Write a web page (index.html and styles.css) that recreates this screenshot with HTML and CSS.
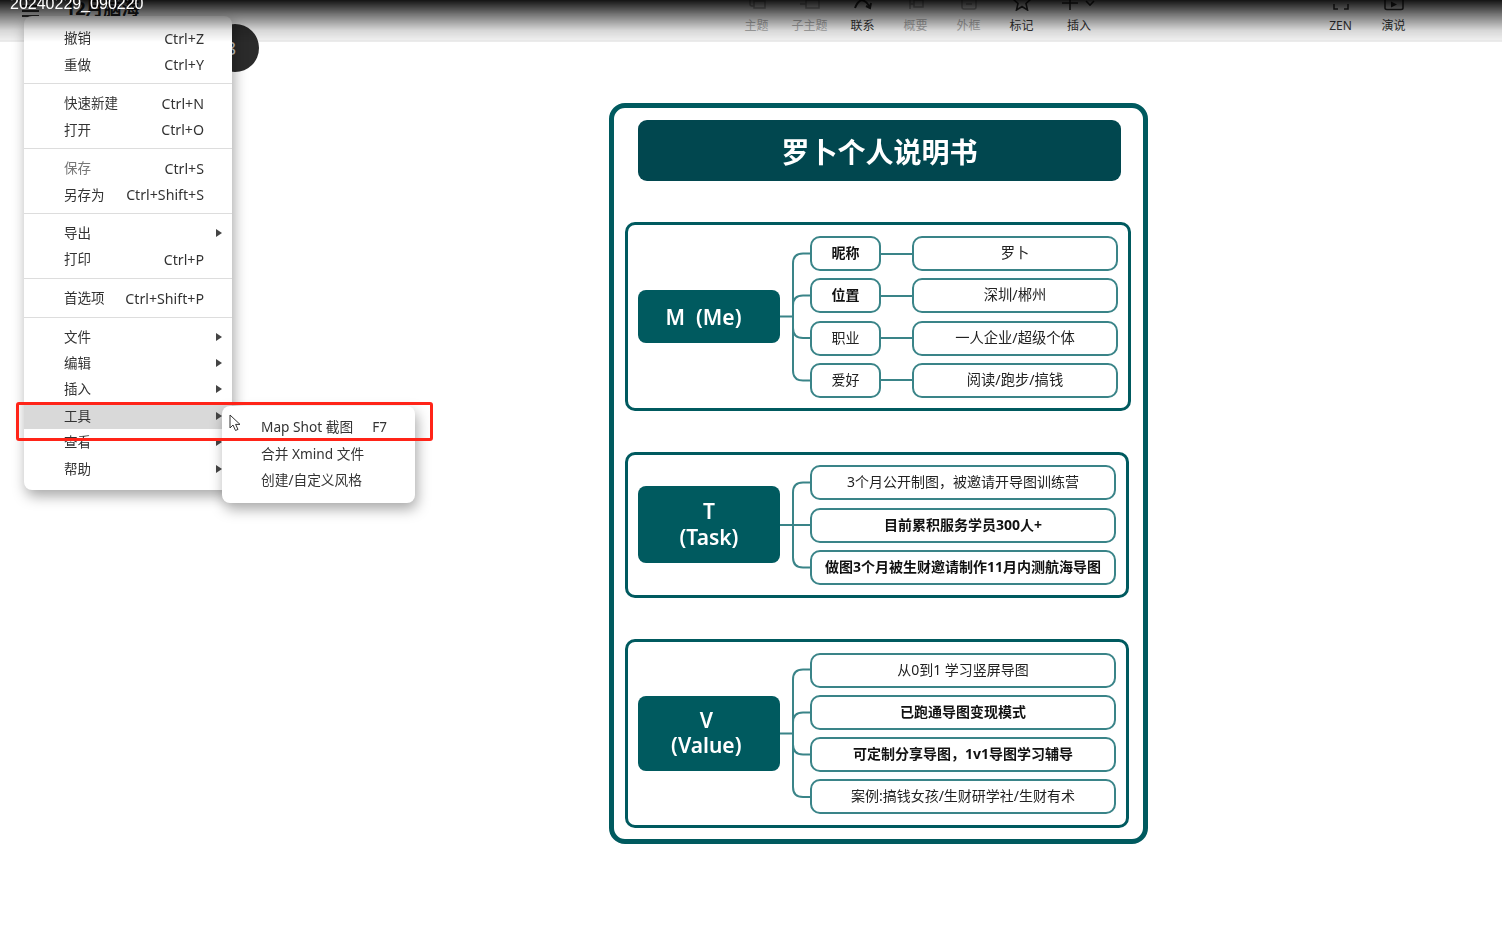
FILE: index.html
```html
<!DOCTYPE html>
<html lang="zh-CN">
<head>
    <meta charset="UTF-8">
    <title>罗卜个人说明书</title>
    <link rel="stylesheet" href="styles.css">
</head>
<body>

    <div class="toolbar">
        <div class="doc">
            <svg class="burger" width="17" height="14" viewBox="0 0 17 14"><path d="M0 1H17M0 6H17M0 11H17" stroke="#333" stroke-width="2" fill="none"/></svg>
            <span class="doc-title">12月脑海</span>
        </div>
        <div class="tools">
            <div class="tool off">
                <svg width="20" height="20" viewBox="0 -10 20 20" fill="none" stroke="currentColor" stroke-width="1.5"><path d="M3 -2V3Q3 5 5 5H7M7 0H18V7H7Z"/></svg>
                <span>主题</span>
            </div>
            <div class="tool off">
                <svg width="20" height="20" viewBox="0 -10 20 20" fill="none" stroke="currentColor" stroke-width="1.5"><path d="M0 3H6M6 -1H19V7H6Z"/></svg>
                <span>子主题</span>
            </div>
            <div class="tool">
                <svg width="20" height="20" viewBox="0 -10 20 20" fill="none" stroke="currentColor" stroke-width="2"><path d="M2 7Q8 -8 17 6M13 5L17 7L18 2"/></svg>
                <span>联系</span>
            </div>
            <div class="tool off">
                <svg width="20" height="20" viewBox="0 -10 20 20" fill="none" stroke="currentColor" stroke-width="1.5"><path d="M4 -2V8M4 3H8M8 -1H17V6H8Z"/></svg>
                <span>概要</span>
            </div>
            <div class="tool off">
                <svg width="20" height="20" viewBox="0 -10 20 20" fill="none" stroke="currentColor" stroke-width="1.5"><path d="M3 -2V6Q3 8 5 8H15Q17 8 17 6V-2M7 3H13"/></svg>
                <span>外框</span>
            </div>
            <div class="tool">
                <svg width="20" height="20" viewBox="0 -10 20 20" fill="none" stroke="currentColor" stroke-width="1.6"><path d="M10 -9L12.5 -2.5L19 -2L14 2.5L15.5 9L10 5.5L4.5 9L6 2.5L1 -2L7.5 -2.5Z"/></svg>
                <span>标记</span>
            </div>
            <div class="tool tool-insert">
                <svg width="36" height="20" viewBox="0 -10 36 20" fill="none" stroke="currentColor" stroke-width="1.6"><path d="M9 -3V9M1 2H17M25 0L29 4L33 0"/></svg>
                <span>插入</span>
            </div>
        </div>
        <div class="tools tools-right">
            <div class="tool">
                <svg width="20" height="20" viewBox="0 -10 20 20" fill="none" stroke="currentColor" stroke-width="1.5"><path d="M3 3V8H7M13 8H17V3"/></svg>
                <span>ZEN</span>
            </div>
            <div class="tool">
                <svg width="22" height="20" viewBox="0 -10 22 20" fill="none" stroke="currentColor" stroke-width="1.5"><path d="M2 -3V7Q2 8.5 4 8.5H18Q20 8.5 20 7V-3"/><path d="M8 0.5L14 3.5L8 6.5Z" fill="currentColor" stroke="none"/></svg>
                <span>演说</span>
            </div>
        </div>
    </div>

    <div class="sheet">
        <div class="sheet-title">罗卜个人说明书</div>

        <div class="section section-me">
            <div class="node node-me">M&nbsp;&nbsp;(Me)&nbsp;&nbsp;</div>
            <svg class="links" width="30" height="162" viewBox="0 0 30 162" fill="none" stroke="#3a8488" stroke-width="2"><path d="M0 80.5H13M30 17.5H23Q13 17.5 13 27.5V134.5Q13 144.5 23 144.5H30M30 59.5H23Q13 59.5 13 69.5M13 92Q13 102 23 102H30"/></svg>
            <div class="stack">
                <div class="pair"><div class="topic key strong">昵称</div><div class="link"></div><div class="topic val">罗卜</div></div>
                <div class="pair"><div class="topic key strong">位置</div><div class="link"></div><div class="topic val">深圳/郴州</div></div>
                <div class="pair"><div class="topic key">职业</div><div class="link"></div><div class="topic val">一人企业/超级个体</div></div>
                <div class="pair"><div class="topic key">爱好</div><div class="link"></div><div class="topic val">阅读/跑步/搞钱</div></div>
            </div>
        </div>

        <div class="section">
            <div class="node node-task">T<br>(Task)</div>
            <svg class="links" width="30" height="120" viewBox="0 0 30 120" fill="none" stroke="#3a8488" stroke-width="2"><path d="M0 60H30M30 17.5H23Q13 17.5 13 27.5V92.5Q13 102.5 23 102.5H30"/></svg>
            <div class="stack">
                <div class="topic wide">3个月公开制图，被邀请开导图训练营</div>
                <div class="topic wide strong">目前累积服务学员300人+</div>
                <div class="topic wide strong">做图3个月被生财邀请制作11月内测航海导图</div>
            </div>
        </div>

        <div class="section">
            <div class="node node-value">V&nbsp;<br>(Value)&nbsp;</div>
            <svg class="links" width="30" height="163" viewBox="0 0 30 163" fill="none" stroke="#3a8488" stroke-width="2"><path d="M0 81.5H13M30 17.5H23Q13 17.5 13 27.5V135Q13 145 23 145H30M30 60.5H23Q13 60.5 13 70.5M13 92.5Q13 102.5 23 102.5H30"/></svg>
            <div class="stack">
                <div class="topic wide">从0到1 学习竖屏导图</div>
                <div class="topic wide strong">已跑通导图变现模式</div>
                <div class="topic wide strong">可定制分享导图，1v1导图学习辅导</div>
                <div class="topic wide">案例:搞钱女孩/生财研学社/生财有术</div>
            </div>
        </div>
    </div>

    <div class="avatar">8</div>

    <div class="menu">
        <div class="row"><span>撤销</span><span class="keys">Ctrl+Z</span></div>
        <div class="row"><span>重做</span><span class="keys">Ctrl+Y</span></div>
        <div class="sep"></div>
        <div class="row"><span>快速新建</span><span class="keys">Ctrl+N</span></div>
        <div class="row"><span>打开</span><span class="keys">Ctrl+O</span></div>
        <div class="sep"></div>
        <div class="row"><span class="muted">保存</span><span class="keys">Ctrl+S</span></div>
        <div class="row"><span>另存为</span><span class="keys">Ctrl+Shift+S</span></div>
        <div class="sep"></div>
        <div class="row more"><span>导出</span><i class="arrow"></i></div>
        <div class="row"><span>打印</span><span class="keys">Ctrl+P</span></div>
        <div class="sep"></div>
        <div class="row"><span>首选项</span><span class="keys">Ctrl+Shift+P</span></div>
        <div class="sep"></div>
        <div class="row more"><span>文件</span><i class="arrow"></i></div>
        <div class="row more"><span>编辑</span><i class="arrow"></i></div>
        <div class="row more"><span>插入</span><i class="arrow"></i></div>
        <div class="row more active"><span>工具</span><i class="arrow"></i></div>
        <div class="row more"><span>查看</span><i class="arrow"></i></div>
        <div class="row more"><span>帮助</span><i class="arrow"></i></div>
    </div>

    <div class="submenu">
        <div class="row"><span>Map Shot 截图</span><span class="keys">F7</span></div>
        <div class="row"><span>合并 Xmind 文件</span></div>
        <div class="row"><span>创建/自定义风格</span></div>
    </div>

    <div class="redbox"></div>

    <svg class="cursor" width="13" height="18" viewBox="0 0 13 18"><path d="M1 1V14L4 11L6.5 16.5L9 15.4L6.6 10.4H11Z" fill="#fff" stroke="#333" stroke-width="1"/></svg>

    <div class="shade"></div>
    <div class="caption">20240229_090220</div>

</body>
</html>
```

FILE: styles.css
```css
html, body {
    margin: 0;
    height: 934px;
    overflow: hidden;
}
body {
    font-family: "Noto Sans", "Noto Sans CJK SC", sans-serif;
    background-color: white;
    color: #333;
    position: relative;
    filter: blur(0.35px);
}

/* toolbar, cut off by the top of the frame */
.toolbar {
    display: flex;
    align-items: flex-end;
    box-sizing: border-box;
    height: 42px;
    padding: 0 82px 7px 22px;
    background-color: #f4f4f4;
    border-bottom: 2px solid #ececec;
    overflow: hidden;
}
.doc {
    align-self: flex-start;
    display: flex;
    width: 708px;
    flex: none;
}
.burger {
    margin-top: 5px;
}
.doc-title {
    margin: -2px 0 0 26px;
    font-size: 18px;
    line-height: 20px;
    font-weight: bold;
    color: #222;
}
.tools {
    display: flex;
}
.tools-right {
    margin-left: auto;
}
.tool {
    display: flex;
    flex-direction: column;
    align-items: center;
    width: 53px;
    font-size: 12px;
    line-height: 14px;
    color: #333;
}
.tool svg {
    margin-bottom: 8px;
}
.tool.off {
    color: #a8a8a8;
}
.tool-insert {
    width: 60px;
    margin-left: 1px;
}

/* mind map sheet */
.sheet {
    box-sizing: border-box;
    width: 539px;
    height: 741px;
    margin: 61px 0 0 609px;
    padding: 12px 11px 11px;
    border: 5px solid #005a5f;
    border-radius: 16px;
    display: flex;
    flex-direction: column;
    gap: 41px;
}
.sheet-title {
    flex: none;
    width: 483px;
    height: 61px;
    margin-left: 13px;
    background-color: #01474f;
    border-radius: 9px;
    color: white;
    font-size: 28px;
    font-weight: bold;
    line-height: 64px;
    text-align: center;
}
.section {
    flex: none;
    display: flex;
    align-items: center;
    box-sizing: border-box;
    width: 504px;
    padding: 10px 10px;
    border: 3px solid #005a5f;
    border-radius: 10px;
}
.section-me {
    width: 506px;
    padding-top: 11px;
}
.node {
    flex: none;
    box-sizing: border-box;
    width: 142px;
    background-color: #005a5f;
    border-radius: 8px;
    color: white;
    font-size: 21px;
    font-weight: 600;
    line-height: 25px;
    text-align: center;
}
.node-me {
    margin-top: -2px;
    padding: 15px 0 13px;
}
.node-task {
    margin-top: -2px;
    line-height: 26px;
    padding: 12px 0 13px;
}
.node-value {
    padding: 12px 0 13px;
}
.links {
    flex: none;
    display: block;
}
.stack {
    display: flex;
    flex-direction: column;
    gap: 7.33px;
}
.pair {
    display: flex;
    align-items: center;
}
.link {
    width: 31px;
    height: 2px;
    background-color: #3a8488;
}
.topic {
    box-sizing: border-box;
    height: 35px;
    border: 2px solid #3a8488;
    border-radius: 10px;
    background-color: white;
    color: #222;
    font-size: 14px;
    line-height: 30px;
    text-align: center;
}
.key {
    width: 71px;
}
.val {
    width: 206px;
    font-size: 14.3px;
}
.wide {
    width: 306px;
}
.strong {
    font-weight: bold;
    color: #111;
}

/* things floating over the page */
.avatar {
    position: absolute;
    left: 211px;
    top: 24px;
    width: 48px;
    height: 48px;
    box-sizing: border-box;
    padding-right: 8px;
    border-radius: 50%;
    background-color: #2b2b2b;
    color: #ccc;
    font-size: 18px;
    line-height: 48px;
    text-align: center;
}
.menu, .submenu {
    position: absolute;
    box-sizing: border-box;
    background-color: white;
    border-radius: 8px;
    box-shadow: 2px 6px 14px rgba(0, 0, 0, 0.35);
    font-size: 13.5px;
    color: #333;
}
.menu {
    left: 24px;
    top: 16px;
    width: 208px;
    height: 474px;
    padding: 9px 0 8px;
}
.submenu {
    left: 222px;
    top: 406px;
    width: 193px;
    height: 97px;
    padding: 8px 0;
}
.row {
    display: flex;
    justify-content: space-between;
    align-items: center;
    height: 26.4px;
    padding: 0 28px 0 40px;
}
.row span:first-child {
    padding-bottom: 2px;
}
.keys {
    font-size: 14.2px;
}
.submenu .row {
    padding-left: 39px;
}
.submenu .row span:first-child {
    font-size: 13.7px;
}
.submenu .keys {
    font-size: 13.5px;
}
.row.more {
    padding-right: 10px;
}
.row.active {
    background-color: #d9d9d9;
}
.muted {
    color: #777;
}
.arrow {
    border-left: 6px solid #444;
    border-top: 4px solid transparent;
    border-bottom: 4px solid transparent;
}
.sep {
    height: 1px;
    margin: 5.6px 0;
    background-color: #ddd;
}
.redbox {
    position: absolute;
    left: 16px;
    top: 402px;
    width: 417px;
    height: 39px;
    box-sizing: border-box;
    border: 3px solid #ff2418;
    border-radius: 3px;
}
.cursor {
    position: absolute;
    left: 229px;
    top: 414px;
}
.shade {
    position: absolute;
    left: 0;
    top: 0;
    width: 100%;
    height: 42px;
    background: linear-gradient(rgba(0, 0, 0, 0.92), rgba(0, 0, 0, 0.5) 36%, rgba(0, 0, 0, 0.12) 72%, rgba(0, 0, 0, 0));
}
.caption {
    position: absolute;
    left: 10px;
    top: -6px;
    font-family: "Liberation Sans", sans-serif;
    font-size: 16px;
    line-height: 20px;
    color: white;
}
```
